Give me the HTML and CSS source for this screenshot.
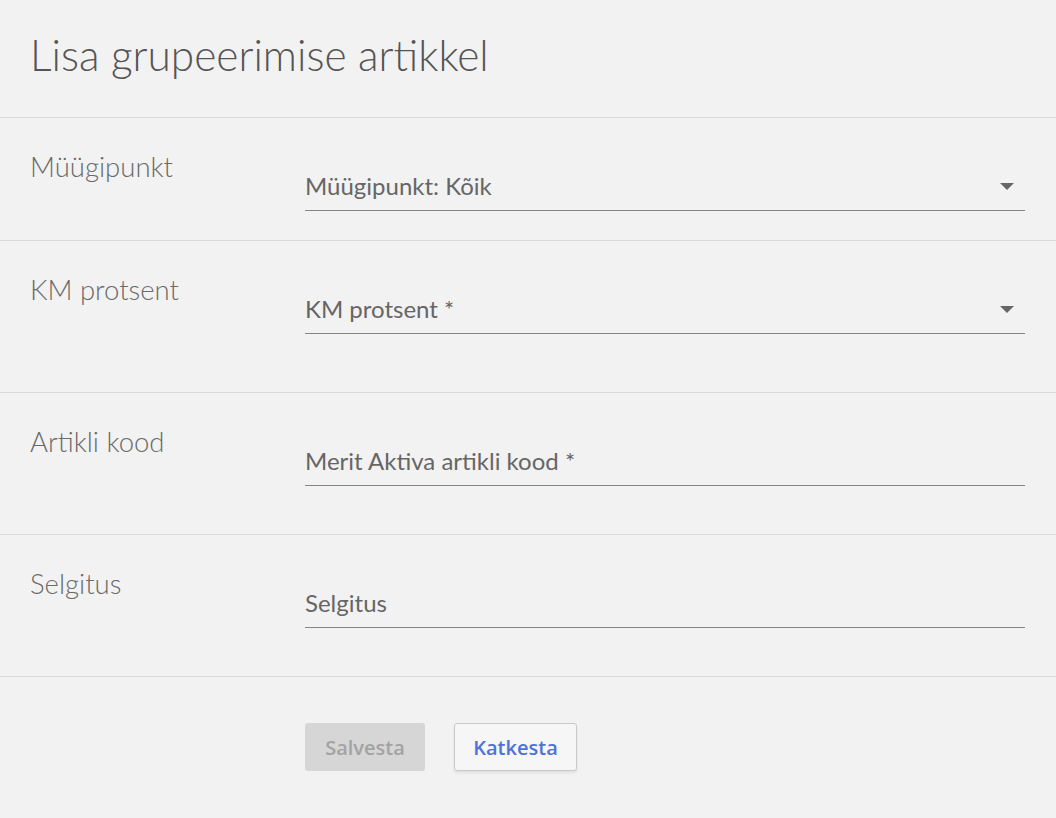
FILE: index.html
```html
<!DOCTYPE html>
<html lang="et">
<head>
<meta charset="utf-8">
<title>Lisa grupeerimise artikkel</title>
<link rel="stylesheet" href="styles.css">
</head>
<body>
<div class="page">
  <header class="head">
    <h1 class="title">Lisa grupeerimise artikkel</h1>
  </header>
  <div class="row row-1">
    <div class="label">Müügipunkt</div>
    <div class="field select">
      <span class="value">Müügipunkt: Kõik</span>
      <span class="arrow"></span>
    </div>
  </div>
  <div class="row row-2">
    <div class="label">KM protsent</div>
    <div class="field select">
      <span class="value">KM protsent *</span>
      <span class="arrow"></span>
    </div>
  </div>
  <div class="row row-3">
    <div class="label">Artikli kood</div>
    <div class="field">
      <span class="value">Merit Aktiva artikli kood *</span>
    </div>
  </div>
  <div class="row row-4">
    <div class="label">Selgitus</div>
    <div class="field">
      <span class="value">Selgitus</span>
    </div>
  </div>
  <div class="actions">
    <button class="btn btn-save" disabled>Salvesta</button>
    <button class="btn btn-cancel">Katkesta</button>
  </div>
</div>
</body>
</html>
```

FILE: styles.css
```css
* { box-sizing: border-box; }
html, body {
  margin: 0;
  padding: 0;
  background: #f2f2f2;
}
body {
  font-family: Lato, "Open Sans", sans-serif;
  color: #555;
  height: 818px;
  overflow: hidden;
}
.page {
  width: 1056px;
}
.head {
  height: 118px;
  border-bottom: 1px solid #d9d9d9;
  padding: 30px 30px 0;
}
.title {
  margin: 0;
  font-weight: 300;
  font-size: 42.4px;
  line-height: 50px;
  color: #555;
}
.row {
  display: flex;
  border-bottom: 1px solid #d9d9d9;
  padding: 0 31px 0 30px;
}
.row-1 { height: 123px; }
.row-2 { height: 152px; }
.row-3 { height: 142px; }
.row-4 { height: 142px; }
.label {
  width: 275px;
  flex: none;
  font-weight: 300;
  font-size: 27.5px;
  line-height: 34px;
  color: #6a6a6a;
  padding-top: 32px;
}
.field {
  flex: 1;
  height: 93px;
  border-bottom: 1px solid #858585;
  display: flex;
  align-items: flex-end;
  justify-content: space-between;
  padding-bottom: 10px;
}
.value {
  font-size: 24px;
  line-height: 28px;
  color: #666;
}
.arrow {
  width: 0;
  height: 0;
  border-left: 7px solid transparent;
  border-right: 7px solid transparent;
  border-top: 7px solid #666;
  margin: 0 11px 10px 0;
}
.actions {
  display: flex;
  gap: 29px;
  padding: 46px 0 0 305px;
}
.btn {
  font-family: "Open Sans", Lato, sans-serif;
  font-weight: 600;
  font-size: 20px;
  height: 48px;
  border-radius: 3px;
  padding: 0;
}
.btn-save {
  width: 120px;
  background: #d6d6d6;
  color: #a3a3a3;
  border: none;
}
.btn-cancel {
  width: 123px;
  background: #f6f6f6;
  color: #4f72d9;
  border: 1px solid #c9c9c9;
  box-shadow: 0 2px 3px rgba(0,0,0,0.08);
}
```
